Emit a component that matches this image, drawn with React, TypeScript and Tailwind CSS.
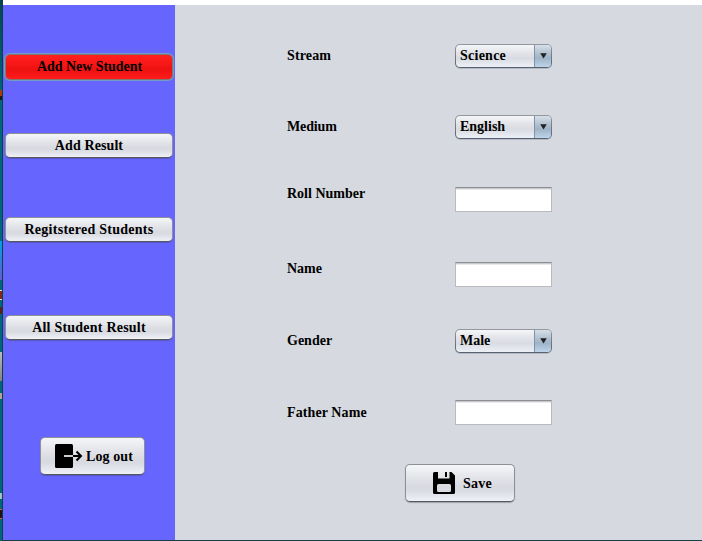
import React from "react";

const raised =
  "border border-[#8f9097] border-b-[#55575d] bg-[linear-gradient(#f5f6f8_0%,#e6e7eb_30%,#d8dae0_60%,#d9dbe2_70%,#eff1f7_100%)] shadow-[0_1px_1px_rgba(60,60,80,0.35)]";

function NavButton({ label, className }: { label: string; className: string }) {
  return (
    <button
      className={`flex h-[25px] w-[168px] shrink-0 items-center justify-center rounded-[5px] pb-px ${raised} ${className}`}
    >
      {label}
    </button>
  );
}

function Row({ label, className, children }: { label: string; className: string; children: React.ReactNode }) {
  return (
    <div className={`flex h-[26px] shrink-0 items-start ${className}`}>
      <span className="w-[168px] leading-4">{label}</span>
      {children}
    </div>
  );
}

function Combo({ value, className = "" }: { value: string; className?: string }) {
  return (
    <div className="-mt-1 h-[24px] w-[97px] rounded-[5px] bg-[linear-gradient(#96989f,#53606f)] p-px shadow-[0_1px_0_rgba(120,130,150,0.35)]">
      <div className="flex h-full overflow-hidden rounded-[4px] bg-[linear-gradient(#f5f6f8_0%,#e3e4e9_35%,#d8dbe1_60%,#eceff6_100%)]">
        <span className={`flex-1 pl-1 leading-[21px] ${className}`}>{value}</span>
        <span className="flex w-[17px] items-center justify-center border-l border-[#7e93a8] bg-[linear-gradient(#d5dfe8_0%,#abbccb_45%,#9fb4c7_60%,#bdd4e9_100%)]">
          <svg width="7" height="6" viewBox="0 0 7 6">
            <path d="M0.2 0.3H6.8L3.5 5.6Z" fill="#202125" />
          </svg>
        </span>
      </div>
    </div>
  );
}

function Field({ className }: { className: string }) {
  return (
    <input
      className={`h-[25px] w-[97px] border border-[#b9babd] border-t-[#8d8e93] bg-white px-1 shadow-[inset_0_1px_0_#c8c9cd,inset_0_2px_0_#eaeaec] outline-none ${className}`}
    />
  );
}

export default function App() {
  return (
    <div className="flex h-[541px] w-[702px] overflow-hidden bg-[#d6d9df] font-['Liberation_Serif',serif] text-[14px] font-bold text-black">
      <div className="flex w-[3px] shrink-0 flex-col border-r border-[#123c49] bg-[#00667a]">
        <div className="h-[90px] bg-[linear-gradient(#064653,#006477)]" />
        <div className="h-[10px] border-t-6 border-[#a63c08] bg-[#1c1a18]" />
        <div className="mt-[141px] h-[39px] bg-[linear-gradient(#00a1e4,#655bd5)]" />
        <div className="mt-[10px] h-[10px] border-y border-[#e6ddd5] bg-[#812a12]" />
        <div className="mt-[7px] h-[7px] bg-[#57220f]" />
        <div className="mt-[38px] h-[29px] bg-[linear-gradient(#bdbcb5,#83837f)]" />
        <div className="mt-[12px] h-[6px] bg-[#b4a392]" />
        <div className="mt-[94px] h-[6px] bg-[#a9c0c0]" />
        <div className="mt-[10px] h-[10px] border-y border-[#d56632] bg-[#201412]" />
      </div>
      <div className="flex min-w-0 flex-1 flex-col border-b border-[#173f47]">
        <div className="h-[5px] shrink-0 bg-white" />
        <div className="flex min-h-0 flex-1">
          <nav className="flex w-[172px] shrink-0 flex-col items-center bg-[#6666ff]">
            <button className="mt-[50px] flex h-[24px] w-[166px] shrink-0 items-center justify-center rounded-[4px] bg-[linear-gradient(#ff2020_0%,#fa1919_30%,#ed1111_60%,#ff1c1c_100%)] pb-px pl-px tracking-[-0.05px] shadow-[0_0_0_1px_#7f7770,0_0_0_2px_#739bc7]">
              Add New Student
            </button>
            <NavButton label="Add Result" className="mt-[54px] tracking-[0.1px]" />
            <NavButton label="Regitstered Students" className="mt-[59px] tracking-[0.26px]" />
            <NavButton label="All Student Result" className="mt-[73px] tracking-[0.22px]" />
            <button
              className={`mt-[97px] ml-[7px] flex h-[38px] w-[105px] shrink-0 items-center rounded-[5px] pl-[14px] ${raised}`}
            >
              <svg width="28" height="24" viewBox="0 0 28 24" className="shrink-0">
                <rect width="18" height="24" rx="1.5" fill="#000" />
                <path d="M9 12H18" stroke="#e4e5e9" strokeWidth="1.8" />
                <path d="M18 12H26M21.5 7.5L26 12L21.5 16.5" fill="none" stroke="#000" strokeWidth="2" />
              </svg>
              <span className="ml-[3px] whitespace-nowrap tracking-[0.1px]">Log out</span>
            </button>
          </nav>
          <main className="flex flex-1 flex-col pl-[112px]">
            <Row label="Stream" className="mt-[43px] tracking-[0.15px]"><Combo value="Science" className="tracking-[0.25px]" /></Row>
            <Row label="Medium" className="mt-[45px] tracking-[-0.15px]"><Combo value="English" className="tracking-[0px]" /></Row>
            <Row label="Roll Number" className="mt-[41px]"><Field className="mt-[1px]" /></Row>
            <Row label="Name" className="mt-[49px]"><Field className="mt-[1px]" /></Row>
            <Row label="Gender" className="mt-[46px]"><Combo value="Male" /></Row>
            <Row label="Father Name" className="mt-[46px] tracking-[0.1px]"><Field className="-mt-[5px]" /></Row>
            <button
              className={`mt-[33px] ml-[118px] flex h-[38px] w-[110px] shrink-0 items-center rounded-[5px] pl-[27px] ${raised}`}
            >
              <svg width="22" height="22" viewBox="0 0 22 22" className="shrink-0">
                <path
                  fillRule="evenodd"
                  d="M1.5 0H5V6.5H16.5V0H18.5L22 3.5V20.5Q22 22 20.5 22H1.5Q0 22 0 20.5V1.5Q0 0 1.5 0ZM5.5 12Q4 12 4 13.5V18.5Q4 20 5.5 20H16.5Q18 20 18 18.5V13.5Q18 12 16.5 12Z"
                />
                <path d="M12 0H14V5H12Z" />
              </svg>
              <span className="ml-2 tracking-[0.2px]">Save</span>
            </button>
          </main>
        </div>
      </div>
    </div>
  );
}
